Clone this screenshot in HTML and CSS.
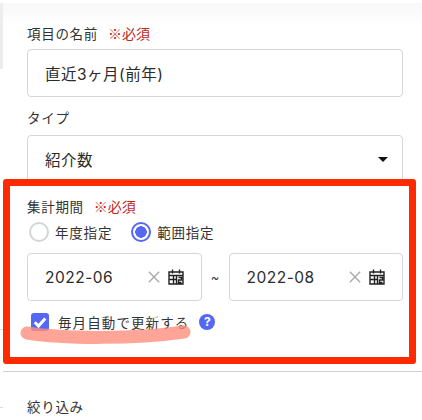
FILE: index.html
```html
<!DOCTYPE html>
<html lang="ja">
<head>
    <meta charset="UTF-8">
    <meta name="viewport" content="width=device-width, initial-scale=1.0">
    <title>項目の編集</title>
    <link rel="stylesheet" href="styles.css">
</head>
<body>
    <div class="page">
        <div class="side-shade"></div>
        <div class="side-tick tick-one"></div>
        <div class="side-tick tick-two"></div>

        <main class="panel">
            <div class="top-fade"></div>

            <section class="form-body">
                <label class="field-label">項目の名前<span class="required">※必須</span></label>
                <div class="input-box">直近3ヶ月(前年)</div>

                <label class="field-label type-label">タイプ</label>
                <div class="input-box select-box">
                    <span>紹介数</span>
                    <span class="caret"></span>
                </div>

                <label class="field-label period-label">集計期間<span class="required">※必須</span></label>
                <div class="radio-row">
                    <span class="radio-item"><span class="radio"></span>年度指定</span>
                    <span class="radio-item"><span class="radio checked"></span>範囲指定</span>
                </div>

                <div class="date-row">
                    <div class="input-box date-box">
                        <span class="date-value">2022-06</span>
                        <svg class="clear-icon" viewBox="0 0 14 14"><path d="M1 1l12 12M13 1L1 13"/></svg>
                        <svg class="cal-icon" viewBox="0 0 16 16"><path d="M1 3h14v12H1zM1 6.500h14M4.500 0.500v4M11.500 0.500v4M5.500 6.500V15M8.500 6.500V15M1 10.500h7.500M10.500 8.500h3v2.500h-3v2.500h3"/></svg>
                    </div>
                    <span class="tilde">~</span>
                    <div class="input-box date-box">
                        <span class="date-value">2022-08</span>
                        <svg class="clear-icon" viewBox="0 0 14 14"><path d="M1 1l12 12M13 1L1 13"/></svg>
                        <svg class="cal-icon" viewBox="0 0 16 16"><path d="M1 3h14v12H1zM1 6.500h14M4.500 0.500v4M11.500 0.500v4M5.500 6.500V15M8.500 6.500V15M1 10.500h7.500M10.500 8.500h3v2.500h-3v2.500h3"/></svg>
                    </div>
                </div>

                <div class="check-row">
                    <span class="checkbox">
                        <svg viewBox="0 0 12 12"><path d="M2.500 6.200l2.500 2.500 4.500-5"/></svg>
                    </span>
                    <span class="check-text">毎月自動で更新する</span>
                    <span class="help">?</span>
                </div>
            </section>

            <section class="filter-part">
                <label class="field-label">絞り込み</label>
            </section>
        </main>

        <!-- 赤枠とマーカーは画像の上に書かれた注釈 -->
        <div class="note-frame"></div>
        <svg class="note-marker" viewBox="0 0 174 22"><path d="M7 9C45 15 115 15 164 8" /></svg>
    </div>
</body>
</html>
```

FILE: styles.css
```css
* {
    margin: 0;
    padding: 0;
    box-sizing: border-box;
    font-family: 'Inter', 'Noto Sans CJK JP', sans-serif;
}

body {
    background: #fff;
    color: #2b2b2b;
    overflow: hidden;
}

.page {
    position: relative;
    width: 422px;
    height: 420px;
    overflow: hidden;
}

/* Левая полоса за панелью */
.side-shade {
    position: absolute;
    left: 0;
    top: 3px;
    width: 3px;
    height: 66px;
    background: #ededed;
}

.side-tick {
    position: absolute;
    left: 0;
    width: 3px;
    height: 1px;
    background: #dcdcdc;
}

.tick-one { top: 329px; }
.tick-two { top: 407px; }

.panel {
    height: 420px;
    margin-left: 3px;
    position: relative;
}

.top-fade {
    height: 22px;
    margin-top: 3px;
    background: linear-gradient(#f8f8f8, #fff);
}

.form-body {
    padding: 0 19px 0 24px;
    height: 347px;
    border-bottom: 1px solid #cfcfcf;
}

.field-label {
    display: block;
    height: 18px;
    font-size: 13.5px;
    line-height: 18px;
    letter-spacing: 0.7px;
    color: #333;
}

.required {
    margin-left: 10px;
    font-family: 'Noto Sans CJK JP', sans-serif;
    font-size: 14px;
    line-height: 1;
    letter-spacing: 0;
    color: #c0291d;
}

.input-box {
    height: 48px;
    margin-top: 6px;
    padding: 0 17px;
    display: flex;
    align-items: center;
    border: 1px solid #d6d6d6;
    border-radius: 4px;
    background: #fff;
    font-size: 15.5px;
    letter-spacing: 0.5px;
}

.type-label {
    margin-top: 12px;
}

.select-box {
    justify-content: space-between;
    margin-top: 8px;
}

.caret {
    width: 0;
    height: 0;
    margin-right: -3px;
    border-left: 5px solid transparent;
    border-right: 5px solid transparent;
    border-top: 5px solid #111;
}

.period-label {
    margin-top: 15px;
}

.radio-row {
    display: flex;
    gap: 19px;
    margin-top: 5px;
    margin-left: 2px;
    font-size: 13.5px;
    letter-spacing: 0.8px;
    color: #333;
}

.radio-item {
    display: flex;
    align-items: center;
    gap: 6px;
    height: 22px;
}

.radio {
    width: 20px;
    height: 20px;
    border: 2px solid #d2d6d6;
    border-radius: 50%;
    background: #fff;
}

.radio.checked {
    border-color: #5468f4;
    background: radial-gradient(circle, #5468f4 0 5.5px, #fff 6px);
}

.date-row {
    display: flex;
    align-items: center;
    margin-top: 10px;
}

.date-box {
    flex: 1;
    margin-top: 0;
}

.date-value {
    flex: 1;
}

.clear-icon {
    width: 12px;
    height: 12px;
    margin-right: 8px;
    fill: none;
    stroke: #a9a9a9;
    stroke-width: 1.6;
}

.cal-icon {
    width: 16px;
    height: 16px;
    flex: none;
    fill: none;
    stroke: #222;
    stroke-width: 1.4;
}

.tilde {
    width: 27px;
    text-align: center;
    font-size: 13px;
    color: #444;
}

.check-row {
    display: flex;
    align-items: center;
    margin-top: 11px;
    margin-left: 4px;
    height: 20px;
}

.checkbox {
    display: flex;
    width: 18px;
    height: 18px;
    border-radius: 3px;
    background: #5468f4;
}

.checkbox svg {
    fill: none;
    stroke: #fff;
    stroke-width: 2;
}

.check-text {
    margin-left: 9px;
    font-size: 13.5px;
    letter-spacing: 1.1px;
    color: #333;
}

.help {
    width: 16px;
    height: 16px;
    margin-left: 10px;
    border-radius: 50%;
    background: #5468f4;
    color: #fff;
    font-size: 12px;
    font-weight: 700;
    line-height: 16px;
    text-align: center;
}

.filter-part {
    padding: 26px 0 0 24px;
}

/* Аннотации поверх скриншота */
.note-frame {
    position: absolute;
    left: 3px;
    top: 179px;
    width: 413px;
    height: 185px;
    border: 7px solid #ff2a00;
    border-radius: 3px;
    pointer-events: none;
}

.note-marker {
    position: absolute;
    left: 20px;
    top: 324px;
    width: 174px;
    height: 22px;
    fill: none;
    stroke: #ff8f7e;
    stroke-opacity: 0.8;
    stroke-width: 13;
    stroke-linecap: round;
}
```
